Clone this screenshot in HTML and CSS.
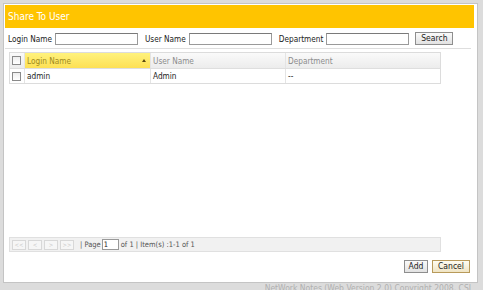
FILE: index.html
```html
<!DOCTYPE html>
<html>
<head>
<meta charset="utf-8">
<link rel="stylesheet" href="styles.css">
</head>
<body>
<div class="window">
  <div class="titlebar">Share To User</div>
  <div class="search">
    <label>Login Name</label><span class="input w82"></span>
    <label class="l2">User Name</label><span class="input w82"></span>
    <label class="l2">Department</label><span class="input w82"></span>
    <span class="btn search-btn">Search</span>
  </div>
  <div class="sep"></div>
  <div class="gridwrap">
    <div class="grid">
      <div class="row head">
        <div class="c chk"><span class="cb"></span></div>
        <div class="c col1 sorted">Login Name<span class="arrow"></span></div>
        <div class="c col2">User Name</div>
        <div class="c col3">Department</div>
      </div>
      <div class="row">
        <div class="c chk"><span class="cb"></span></div>
        <div class="c col1">admin</div>
        <div class="c col2">Admin</div>
        <div class="c col3">--</div>
      </div>
    </div>
    <div class="spacer"></div>
    <div class="pager">
      <span class="pb">&lt;&lt;</span><span class="pb">&lt;</span><span class="pb">&gt;</span><span class="pb">&gt;&gt;</span>
      <span class="ptxt">| Page</span><span class="pinput">1</span><span class="ptxt2">of 1 | Item(s) :1-1 of 1</span>
    </div>
  </div>
  <div class="actions">
    <span class="btn add">Add</span><span class="btn cancel">Cancel</span>
  </div>
</div>
<div class="footer">NetWork Notes (Web Version 2.0) Copyright 2008, CSI</div>
</body>
</html>
```
FILE: styles.css
```css
html, body {
  margin: 0;
  padding: 0;
}
body {
  width: 483px;
  height: 290px;
  overflow: hidden;
  background: #dcdcdc;
  font-family: "DejaVu Sans Condensed", "DejaVu Sans", sans-serif;
  font-stretch: condensed;
  font-size: 8.2px;
  color: #222;
}
.window {
  margin: 3px 5px 0 3px;
  height: 277px;
  background: #fff;
  border: 1px solid #c4c4c4;
  padding: 1px 3px 0 1px;
  box-sizing: content-box;
}
.titlebar {
  height: 23px;
  line-height: 23px;
  background: #ffc400;
  color: #fff;
  font-size: 10px;
  padding-left: 3px;
}
.search {
  display: flex;
  align-items: center;
  height: 13px;
  margin-top: 4px;
  padding-left: 3px;
}
.search label {
  margin-right: 3px;
  white-space: nowrap;
}
.search .l2 {
  margin-left: 7px;
}
.input {
  display: inline-block;
  height: 10px;
  border: 1px solid #9a9a9a;
  border-top-color: #7a7a7a;
  background: #fff;
}
.w82 { width: 81px; }
.btn {
  display: inline-block;
  height: 11px;
  line-height: 11px;
  padding: 0 3px;
  border: 1px solid #8e8e8e;
  background: linear-gradient(#fafafa, #e2e2e2);
  color: #222;
  font-size: 8.5px;
  text-align: center;
}
.search-btn {
  margin-left: 6px;
  width: 30px;
}
.sep {
  height: 1px;
  background: #dedede;
  margin: 3px 3px 0 0;
}
.gridwrap {
  margin: 3px 0 0 4px;
  width: 432px;
}
.grid {
  border: 1px solid #dcdcdc;
}
.row {
  display: flex;
  height: 14px;
  align-items: stretch;
}
.row.head {
  height: 15px;
  background: linear-gradient(#fafafa, #ececec);
  color: #8c8c8c;
  border-bottom: 1px solid #dedede;
}
.c {
  display: flex;
  align-items: center;
  padding-left: 2px;
  box-sizing: border-box;
  border-right: 1px solid #e4e4e4;
  white-space: nowrap;
  position: relative;
}
.c:last-child { border-right: none; }
.chk {
  width: 15px;
  padding-left: 2px;
}
.cb {
  display: inline-block;
  width: 7px;
  height: 7px;
  border: 1px solid #8a8a8a;
  background: linear-gradient(#eeeeee, #ffffff);
}
.col1 { width: 126px; }
.col2 { width: 135px; }
.col3 { flex: 1; }
.sorted {
  background: linear-gradient(#fff27d, #fde054);
  color: #a08a20;
}
.arrow {
  position: absolute;
  right: 4px;
  top: 6px;
  width: 0;
  height: 0;
  border-left: 2px solid transparent;
  border-right: 2px solid transparent;
  border-bottom: 3px solid #5a4a10;
}
.spacer { height: 153px; }
.pager {
  display: flex;
  align-items: center;
  height: 13px;
  background: #f1f1f1;
  border: 1px solid #e0e0e0;
  padding-left: 2px;
  color: #555;
  font-size: 7.5px;
}
.pb {
  display: inline-block;
  width: 12px;
  height: 8px;
  line-height: 8px;
  border: 1px solid #d8d8d8;
  background: #f6f6f6;
  color: #c8c8c8;
  font-size: 6px;
  text-align: center;
  margin-right: 2px;
}
.ptxt { margin-left: 4px; margin-right: 1px; }
.pinput {
  display: inline-block;
  width: 14px;
  height: 9px;
  line-height: 9px;
  border: 1px solid #999;
  background: #fff;
  color: #222;
  padding-left: 1px;
  margin-right: 2px;
}
.actions {
  display: flex;
  justify-content: flex-end;
  gap: 4px;
  margin-top: 8px;
  padding-right: 4px;
}
.add { width: 16px; }
.cancel {
  width: 30px;
  border-color: #b89a5a;
  background: linear-gradient(#fffdf2, #efe4c4);
}
.footer {
  text-align: right;
  padding-right: 12px;
  color: #b0b0b0;
  font-size: 8.5px;
  line-height: 10px;
}
```
